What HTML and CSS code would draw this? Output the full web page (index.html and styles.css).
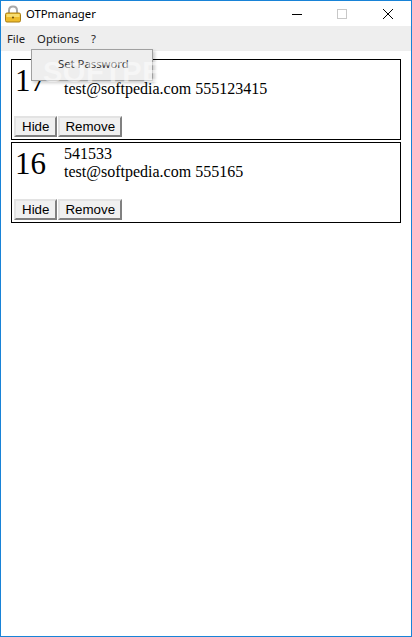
FILE: index.html
```html
<!DOCTYPE html>
<html lang="en">
<head>
    <meta charset="UTF-8">
    <meta name="viewport" content="width=device-width, initial-scale=1.0">
    <title>OTPmanager</title>
    <link rel="stylesheet" href="styles.css">
</head>
<body>
    <div class="window">
        <div class="titlebar">
            <svg class="app-icon" width="18" height="18" viewBox="0 0 18 18">
                <path d="M5 9V5.500C5 3 6.800 1.500 9 1.500S13 3 13 5.500V9" fill="none" stroke="#a8a8a8" stroke-width="2"/>
                <rect x="1.500" y="8" width="15" height="9" rx="1.500" fill="#eebc2c" stroke="#a87c10" stroke-width="1"/>
                <rect x="2.500" y="9" width="13" height="3" fill="#f8de70"/>
                <circle cx="9" cy="12.500" r="1" fill="#6a4a08"/>
            </svg>
            <span class="app-title">OTPmanager</span>
            <div class="window-controls">
                <svg class="control" width="46" height="26" viewBox="0 0 46 26">
                    <path d="M19 13.500H29" stroke="#000" stroke-width="1"/>
                </svg>
                <svg class="control" width="46" height="26" viewBox="0 0 46 26">
                    <rect x="18.500" y="8.500" width="9" height="9" fill="none" stroke="#c8c8c8"/>
                </svg>
                <svg class="control" width="46" height="26" viewBox="0 0 46 26">
                    <path d="M18 8L28 18M28 8L18 18" stroke="#000" stroke-width="1"/>
                </svg>
            </div>
        </div>

        <div class="menubar">
            <span class="menu-item">File</span>
            <span class="menu-item">Options</span>
            <span class="menu-item">?</span>
            <div class="dropdown">Set Password</div>
        </div>

        <div class="content">
            <div class="entry">
                <div class="entry-top">
                    <div class="entry-number">17</div>
                    <div class="entry-text">
                        <!-- code line is hidden by the open menu -->
                        <div>&nbsp;</div>
                        <div>test@softpedia.com 555123415</div>
                    </div>
                </div>
                <div class="entry-buttons">
                    <button>Hide</button>
                    <button class="remove">Remove</button>
                </div>
            </div>
            <div class="entry">
                <div class="entry-top">
                    <div class="entry-number">16</div>
                    <div class="entry-text">
                        <div>541533</div>
                        <div>test@softpedia.com 555165</div>
                    </div>
                </div>
                <div class="entry-buttons">
                    <button>Hide</button>
                    <button class="remove">Remove</button>
                </div>
            </div>
        </div>

        <div class="watermark">SOFTPEDIA</div>
    </div>
</body>
</html>
```

FILE: styles.css
```css
html, body {
    margin: 0;
    height: 100%;
}

.window {
    position: relative;
    box-sizing: border-box;
    height: 637px;
    border: 1px solid #1883d7;
    background: white;
    overflow: hidden;
    font-family: 'Liberation Serif', serif;
}

.titlebar {
    display: flex;
    align-items: center;
    height: 25px;
    font-family: 'Noto Sans', sans-serif;
    font-size: 11.3px;
    color: black;
}

.app-icon {
    margin: 0 4px 0 3px;
}

.window-controls {
    display: flex;
    margin-left: auto;
}

.menubar {
    position: relative;
    display: flex;
    align-items: center;
    height: 25px;
    padding-left: 6px;
    gap: 12px;
    background: #eeeeee;
    font-family: 'Noto Sans', sans-serif;
    font-size: 11.3px;
    color: #222;
}

.dropdown {
    position: absolute;
    top: 23px;
    left: 30px;
    box-sizing: border-box;
    width: 122px;
    height: 32px;
    padding: 6px 0 0 26px;
    background: #eeeeee;
    border: 1px solid #a0a0a0;
    box-shadow: 2px 2px 3px rgba(0, 0, 0, 0.2);
    color: #333;
    z-index: 2;
}

.content {
    display: flex;
    flex-direction: column;
    gap: 2px;
    padding: 8px 10px 0;
}

.entry {
    box-sizing: border-box;
    height: 81px;
    border: 1px solid black;
    padding: 2px;
    display: flex;
    flex-direction: column;
    justify-content: space-between;
}

.entry-top {
    display: flex;
}

.entry-number {
    width: 50px;
    padding: 0 0 0 1px;
    box-sizing: border-box;
    font-size: 31px;
    line-height: 37px;
}

.entry-text {
    font-size: 16px;
    line-height: 18px;
}

.entry-buttons {
    display: flex;
    gap: 1px;
}

button {
    box-sizing: border-box;
    height: 21px;
    padding: 0 6px;
    background: #f0f0f0;
    border: 2px solid;
    border-color: #e3e3e3 #808080 #808080 #e3e3e3;
    font-family: 'Liberation Sans', sans-serif;
    font-size: 13.33px;
    color: black;
}

button.remove {
    padding: 0 5px;
}

.watermark {
    position: absolute;
    top: 55px;
    left: 42px;
    font-family: 'Liberation Sans', sans-serif;
    font-weight: bold;
    font-size: 29px;
    letter-spacing: 0.5px;
    color: rgba(255, 255, 255, 0.5);
    pointer-events: none;
    z-index: 3;
}
```
